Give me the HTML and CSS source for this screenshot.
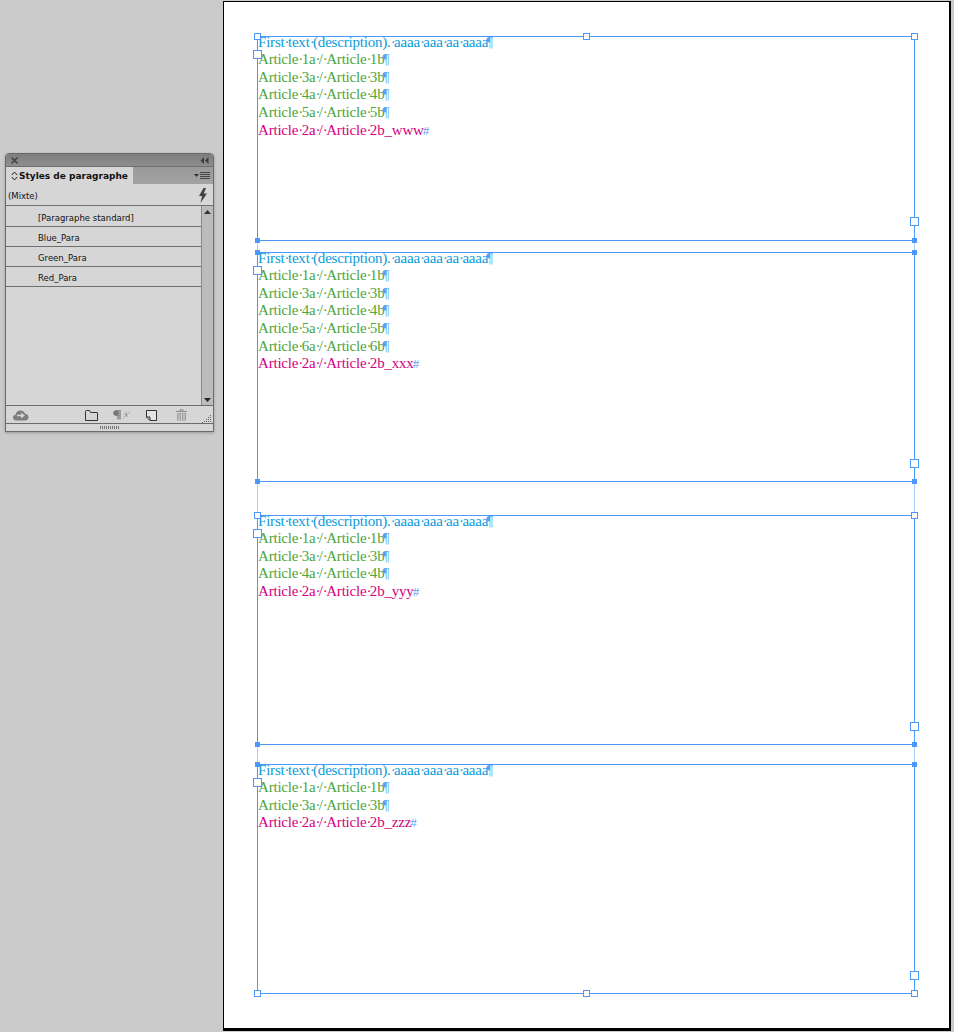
FILE: index.html
```html
<!DOCTYPE html>
<html lang="en">
<head>
  <meta charset="UTF-8" />
  <title>Styles de paragraphe</title>
  <link rel="stylesheet" href="styles.css">
</head>
<body>
  <div class="side">
    <div class="panel">
      <div class="title-bar">
        <svg width="7" height="7" viewBox="0 0 7 7"><path d="M0.5 0.5l6 6M6.5 0.5l-6 6" stroke="#3c3c3c" stroke-width="1.3" fill="none"/></svg>
        <svg width="9" height="7" viewBox="0 0 9 7"><path d="M4 0v7L0.5 3.5zM8.5 0v7L5 3.5z" fill="#3c3c3c"/></svg>
      </div>
      <div class="tab-row">
        <div class="tab">
          <svg class="tab-arrows" width="7" height="10" viewBox="0 0 7 10"><path d="M0.8 4L3.5 1l2.7 3M0.8 6l2.7 3 2.7-3" stroke="#222" stroke-width="1" fill="none"/></svg>
          <span>Styles de paragraphe</span>
        </div>
        <svg class="menu-icon" width="16" height="9" viewBox="0 0 16 9"><path d="M0 3h5L2.500 6z" fill="#333"/><path d="M6 1.500h10M6 3.500h10M6 5.500h10M6 7.500h10" stroke="#444" stroke-width="1"/></svg>
      </div>
      <div class="mixed-row">
        <span>(Mixte)</span>
        <svg width="10" height="15" viewBox="0 0 10 15"><path d="M5.500 0L1 8h3L2.500 15 9 5.500H5.800L8 0z" fill="#444"/></svg>
      </div>
      <div class="list-area">
        <ul class="style-list">
          <li>[Paragraphe standard]</li>
          <li>Blue_Para</li>
          <li>Green_Para</li>
          <li>Red_Para</li>
        </ul>
        <div class="scrollbar">
          <svg width="7" height="4" viewBox="0 0 7 4"><path d="M3.500 0L7 4H0z" fill="#333"/></svg>
          <svg width="7" height="4" viewBox="0 0 7 4"><path d="M0 0h7L3.500 4z" fill="#222"/></svg>
        </div>
      </div>
      <div class="tool-row">
        <svg class="ic-cloud" width="16" height="11" viewBox="0 0 16 11"><path d="M3 10.500C1 10.500 0 9 0 7.500 0 6 1 5 2.500 4.800 3 2 5 0.500 7.500 0.500 10 0.500 11.500 2 12 3.800 14.500 4 15.500 5.800 15.500 7.300 15.500 9.300 14 10.500 12.500 10.500z" fill="#7d7d7d"/><path d="M4 4.700h4V2.800l4 2.700-4 2.700V6.300H4z" fill="#d6d6d6"/></svg>
        <svg class="ic-folder" width="13" height="11" viewBox="0 0 13 11"><path d="M0.500 10.500V1.500q0-1 1-1h3l1 2h6.500a0.500 0.500 0 0 1 .5 .5v7.500z" fill="none" stroke="#333" stroke-width="1"/></svg>
        <svg class="ic-para" width="18" height="10" viewBox="0 0 18 10"><path d="M7 0.500v9M5 0.500v9" stroke="#777" stroke-width="1.200"/><path d="M5 0.500H3a2.500 2.500 0 0 0 0 5h2zM8 0.500h-3" fill="#777" stroke="#777" stroke-width="0.600"/><path d="M10 8.500l7-7M11 3.500l4 3M13.500 1.500l-.5 5" stroke="#999" stroke-width="0.800" fill="none"/></svg>
        <svg class="ic-page" width="11" height="11" viewBox="0 0 11 11"><path d="M0.500 0.500h10v10H4L0.500 7z" fill="#e4e4e4" stroke="#333" stroke-width="1"/><path d="M0.500 7H4v3.500" fill="none" stroke="#333" stroke-width="1"/></svg>
        <svg class="ic-trash" width="11" height="12" viewBox="0 0 11 12"><path d="M0 2.500h11M4 2V0.700h3V2" stroke="#8a8a8a" stroke-width="1" fill="none"/><path d="M1 4h9v7.500H1z" fill="#a0a0a0"/><path d="M3 4.500v6.500M5.500 4.500v6.500M8 4.500v6.500" stroke="#d6d6d6" stroke-width="1"/></svg>
        <svg class="ic-resize" width="10" height="9" viewBox="0 0 10 9"><path d="M8 1h1v1H8zM6 3h1v1H6zM8 3h1v1H8zM4 5h1v1H4zM6 5h1v1H6zM8 5h1v1H8zM2 7h1v1H2zM4 7h1v1H4zM6 7h1v1H6zM8 7h1v1H8zM0 8h1v1H0z" fill="#666"/></svg>
      </div>
      <div class="grip-row"><span class="grip"></span></div>
    </div>
  </div>

  <div class="page">
    <div class="frame frame-first">
      <i class="h open tl"></i><i class="h open tm"></i><i class="h open tr"></i>
      <i class="h port in"></i><i class="h port out"></i>
      <i class="h fill bl"></i><i class="h fill br"></i>
      <p class="blue">First<b>·</b>text<b>·</b>(description).<b>·</b>aaaa<b>·</b>aaa<b>·</b>aa<b>·</b>aaaa<span class="mark">¶</span></p>
      <p class="green">Article<b>·</b>1a<b>·</b>/<b>·</b>Article<b>·</b>1b<span class="mark">¶</span></p>
      <p class="green">Article<b>·</b>3a<b>·</b>/<b>·</b>Article<b>·</b>3b<span class="mark">¶</span></p>
      <p class="green">Article<b>·</b>4a<b>·</b>/<b>·</b>Article<b>·</b>4b<span class="mark">¶</span></p>
      <p class="green">Article<b>·</b>5a<b>·</b>/<b>·</b>Article<b>·</b>5b<span class="mark">¶</span></p>
      <p class="red">Article<b>·</b>2a<b>·</b>/<b>·</b>Article<b>·</b>2b_www<span class="mark end">#</span></p>
    </div>
    <div class="link link-a"></div>
    <div class="frame">
      <i class="h fill tl"></i><i class="h fill tr"></i>
      <i class="h port in"></i><i class="h port out"></i>
      <i class="h fill bl"></i><i class="h fill br"></i>
      <p class="blue">First<b>·</b>text<b>·</b>(description).<b>·</b>aaaa<b>·</b>aaa<b>·</b>aa<b>·</b>aaaa<span class="mark">¶</span></p>
      <p class="green">Article<b>·</b>1a<b>·</b>/<b>·</b>Article<b>·</b>1b<span class="mark">¶</span></p>
      <p class="green">Article<b>·</b>3a<b>·</b>/<b>·</b>Article<b>·</b>3b<span class="mark">¶</span></p>
      <p class="green">Article<b>·</b>4a<b>·</b>/<b>·</b>Article<b>·</b>4b<span class="mark">¶</span></p>
      <p class="green">Article<b>·</b>5a<b>·</b>/<b>·</b>Article<b>·</b>5b<span class="mark">¶</span></p>
      <p class="green">Article<b>·</b>6a<b>·</b>/<b>·</b>Article<b>·</b>6b<span class="mark">¶</span></p>
      <p class="red">Article<b>·</b>2a<b>·</b>/<b>·</b>Article<b>·</b>2b_xxx<span class="mark end">#</span></p>
    </div>
    <div class="link link-b"></div>
    <div class="frame">
      <i class="h open tl"></i><i class="h open tr"></i>
      <i class="h port in"></i><i class="h port out"></i>
      <i class="h fill bl"></i><i class="h fill br"></i>
      <p class="blue">First<b>·</b>text<b>·</b>(description).<b>·</b>aaaa<b>·</b>aaa<b>·</b>aa<b>·</b>aaaa<span class="mark">¶</span></p>
      <p class="green">Article<b>·</b>1a<b>·</b>/<b>·</b>Article<b>·</b>1b<span class="mark">¶</span></p>
      <p class="green">Article<b>·</b>3a<b>·</b>/<b>·</b>Article<b>·</b>3b<span class="mark">¶</span></p>
      <p class="green">Article<b>·</b>4a<b>·</b>/<b>·</b>Article<b>·</b>4b<span class="mark">¶</span></p>
      <p class="red">Article<b>·</b>2a<b>·</b>/<b>·</b>Article<b>·</b>2b_yyy<span class="mark end">#</span></p>
    </div>
    <div class="link link-c"></div>
    <div class="frame">
      <i class="h fill tl"></i><i class="h fill tr"></i>
      <i class="h port in"></i><i class="h port out"></i>
      <i class="h open bl"></i><i class="h open bm"></i><i class="h open br"></i>
      <p class="blue">First<b>·</b>text<b>·</b>(description).<b>·</b>aaaa<b>·</b>aaa<b>·</b>aa<b>·</b>aaaa<span class="mark">¶</span></p>
      <p class="green">Article<b>·</b>1a<b>·</b>/<b>·</b>Article<b>·</b>1b<span class="mark">¶</span></p>
      <p class="green">Article<b>·</b>3a<b>·</b>/<b>·</b>Article<b>·</b>3b<span class="mark">¶</span></p>
      <p class="red">Article<b>·</b>2a<b>·</b>/<b>·</b>Article<b>·</b>2b_zzz<span class="mark end">#</span></p>
    </div>
  </div>
</body>
</html>
```

FILE: styles.css
```css
html, body {
  margin: 0;
  height: 100%;
}
body {
  background: #cbcbcb;
  display: flex;
  align-items: flex-start;
  overflow: hidden;
}

/* left column + panel */
.side {
  width: 223px;
  flex: none;
  padding: 153px 0 0 5px;
  box-sizing: border-box;
}
.panel {
  width: 209px;
  height: 279px;
  box-sizing: border-box;
  display: flex;
  flex-direction: column;
  background: #d6d6d6;
  border: 1px solid #6b6b6b;
  border-radius: 4px 4px 0 0;
  font-family: "DejaVu Sans", sans-serif;
  font-size: 8.5px;
  color: #111;
  box-shadow: 0 1px 3px rgba(0, 0, 0, 0.25);
}
.title-bar {
  height: 12px;
  flex: none;
  display: flex;
  align-items: center;
  justify-content: space-between;
  padding: 0 4px 0 5px;
  background: linear-gradient(#7e7e7e, #8e8e8e);
  border-radius: 3px 3px 0 0;
}
.tab-row {
  height: 18px;
  flex: none;
  display: flex;
  justify-content: space-between;
  background: linear-gradient(#9a9a9a, #a2a2a2);
  box-sizing: border-box;
  border-top: 1px solid #6f6f6f;
  padding-right: 3px;
}
.tab {
  width: 127px;
  display: flex;
  align-items: center;
  gap: 1px;
  padding-left: 5px;
  box-sizing: border-box;
  background: #d6d6d6;
  margin-bottom: -1px;
  font-weight: bold;
  font-size: 9px;
  white-space: nowrap;
}
.tab-arrows {
  flex: none;
}
.menu-icon {
  align-self: center;
}
.mixed-row {
  height: 22px;
  flex: none;
  box-sizing: border-box;
  display: flex;
  align-items: center;
  justify-content: space-between;
  padding: 2px 5px 0 2px;
  border-bottom: 1px solid #6f6f6f;
}
.list-area {
  flex: 1;
  display: flex;
  min-height: 0;
}
.style-list {
  flex: 1;
  list-style: none;
  margin: 0;
  padding: 0;
}
.style-list li {
  height: 20px;
  box-sizing: border-box;
  border-bottom: 1px solid #6f6f6f;
  padding: 5px 0 0 32px;
  line-height: 13px;
  white-space: nowrap;
}
.style-list li:first-child {
  height: 21px;
  padding-top: 6px;
}
.scrollbar {
  width: 12px;
  flex: none;
  box-sizing: border-box;
  display: flex;
  flex-direction: column;
  align-items: center;
  justify-content: space-between;
  padding: 4px 0 3px;
  background: #bcbcbc;
  border-left: 1px solid #8a8a8a;
}
.tool-row {
  height: 19px;
  flex: none;
  box-sizing: border-box;
  border-top: 1px solid #6b6b6b;
  border-bottom: 1px solid #6b6b6b;
  display: flex;
  align-items: center;
  padding: 1px 0 0 7px;
}
.ic-folder { margin-left: 56px; }
.ic-para { margin-left: 15px; }
.ic-page { margin-left: 15px; }
.ic-trash { margin-left: 19px; }
.ic-resize { margin: 6px 0 0 15px; }
.grip-row {
  height: 7px;
  flex: none;
  display: flex;
  justify-content: center;
  align-items: center;
}
.grip {
  width: 19px;
  height: 3px;
  background: repeating-linear-gradient(90deg, #777 0 1px, transparent 1px 2px);
}

/* document page */
.page {
  width: 728px;
  height: 1030px;
  flex: none;
  margin-top: 1px;
  box-sizing: border-box;
  background: #fff;
  border: solid #000;
  border-width: 1px 2px 3px 1px;
  padding: 34px 0 0 33px;
}
.frame {
  position: relative;
  width: 658px;
  height: 230px;
  box-sizing: border-box;
  border: 1px solid #4d98fb;
  font-family: "Liberation Serif", serif;
  font-size: 15px;
  line-height: 17.6px;
  letter-spacing: -0.2px;
}
.frame-first {
  height: 205px;
}
.frame p {
  margin: 0;
  white-space: nowrap;
}
.frame p:first-of-type {
  margin-top: -3.4px;
}
/* hidden-character dots between words */
.frame b {
  font-weight: normal;
  letter-spacing: -1.6px;
}
.link {
  width: 658px;
  box-sizing: border-box;
  border: solid #a9cdfd;
  border-width: 0 1px;
}
.link-a { height: 11px; }
.link-b { height: 33px; }
.link-c { height: 19px; }

.blue { color: #0a9bdc; }
.green { color: #4ba63c; }
.red { color: #d5007f; }
.mark {
  color: #5c9ff5;
  margin-left: -2px;
}
.mark.end {
  font-size: 13px;
  margin-left: -1px;
}

/* selection handles, sit on the frame edges */
.h {
  position: absolute;
  box-sizing: border-box;
  z-index: 1;
}
.open {
  width: 7px;
  height: 7px;
  background: #fff;
  border: 1px solid #4d98fb;
}
.fill {
  width: 5px;
  height: 5px;
  background: #4d98fb;
}
.port {
  width: 9px;
  height: 9px;
  background: #fff;
  border: 1px solid #4d98fb;
}
.open.tl { left: -4px; top: -4px; }
.open.tr { right: -4px; top: -4px; }
.open.bl { left: -4px; bottom: -4px; }
.open.br { right: -4px; bottom: -4px; }
.open.tm { left: 325px; top: -4px; }
.open.bm { left: 325px; bottom: -4px; }
.fill.tl { left: -3px; top: -3px; }
.fill.tr { right: -3px; top: -3px; }
.fill.bl { left: -3px; bottom: -3px; }
.fill.br { right: -3px; bottom: -3px; }
.port.in { left: -5px; top: 13px; }
.port.out { right: -5px; bottom: 13px; }
.frame-first .port.out { bottom: 14px; }
```
